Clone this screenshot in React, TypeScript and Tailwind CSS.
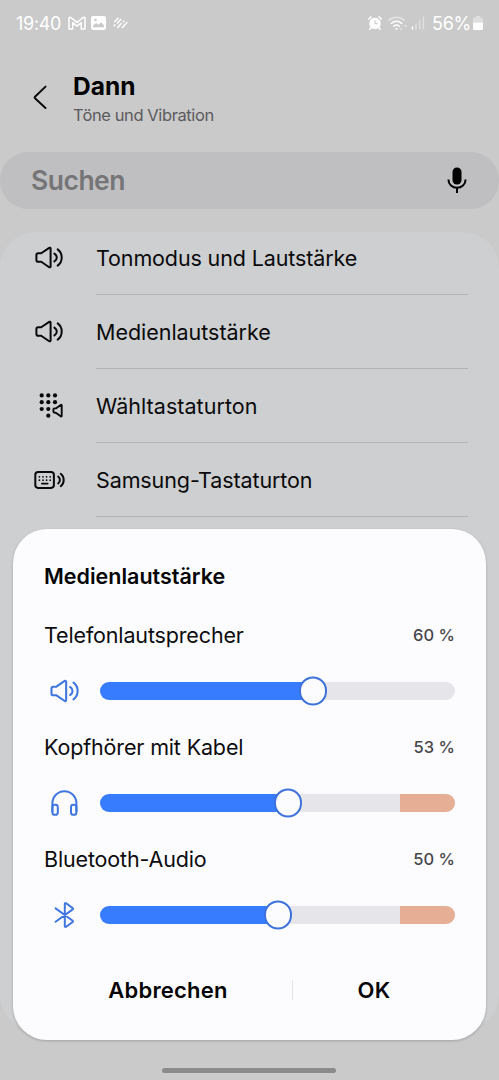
import { useState } from "react";
import type { ReactNode } from "react";

interface IconProps {
  className?: string;
}

function SpeakerIcon({ className = "" }: IconProps) {
  return (
    <svg viewBox="0 0 30 25" fill="none" stroke="currentColor" strokeWidth="2" strokeLinecap="round" strokeLinejoin="round" className={className}>
      <path d="M7.2 8.3H4.2a1.8 1.8 0 0 0-1.8 1.8v4.8a1.8 1.8 0 0 0 1.8 1.8h3l8 5.5a.9.9 0 0 0 1.4-.7v-18a.9.9 0 0 0-1.4-.7z" />
      <path d="M20.4 8.6q2.4 1.6 2.4 3.9t-2.4 3.9" />
      <path d="M23.7 4.4q4 2.9 4 8.1t-4 8.1" />
    </svg>
  );
}

function DialpadIcon({ className = "" }: IconProps) {
  const dots = [
    [7.7, 3.4], [14.3, 3.4], [21, 3.4],
    [7.7, 10.2], [14.3, 10.2], [21, 10.2],
    [7.7, 17], [14.3, 17],
    [14.3, 23.7],
  ];
  return (
    <svg viewBox="0 0 32 28" fill="none" className={className}>
      {dots.map(([x, y]) => (
        <circle key={`${x}-${y}`} cx={x} cy={y} r="2.1" fill="currentColor" />
      ))}
      <path
        d="M21.8 16.4h-1.2a1.2 1.2 0 0 0-1.2 1.2v2a1.2 1.2 0 0 0 1.2 1.2h1.2l4.9 3.5a.6.6 0 0 0 1-.5V13.4a.6.6 0 0 0-1-.5z"
        stroke="currentColor"
        strokeWidth="1.9"
        strokeLinejoin="round"
      />
    </svg>
  );
}

function KeyboardSoundIcon({ className = "" }: IconProps) {
  return (
    <svg viewBox="0 0 32 24" fill="none" stroke="currentColor" strokeLinecap="round" className={className}>
      <rect x="1.3" y="3.9" width="18.6" height="16" rx="2.8" strokeWidth="2" />
      <path d="M5.4 8.8h.01M9 8.8h.01M12.6 8.8h.01M16.2 8.8h.01M5.4 12.2h.01M9 12.2h.01M12.6 12.2h.01M16.2 12.2h.01" strokeWidth="1.7" />
      <path d="M7.8 15.6h6" strokeWidth="1.6" />
      <path d="M24.2 8.6q1.7 1.4 1.7 3.4t-1.7 3.4M26.8 5.8q2.9 2.3 2.9 6.2t-2.9 6.2" strokeWidth="2" />
    </svg>
  );
}

function HeadphonesIcon({ className = "" }: IconProps) {
  return (
    <svg viewBox="0 0 30 30" fill="none" stroke="currentColor" strokeWidth="2" className={className}>
      <path d="M3.4 24V15.3a12 12 0 0 1 24 0V24" />
      <rect x="3.4" y="16.8" width="5.4" height="10" rx="2.4" />
      <rect x="22" y="16.8" width="5.4" height="10" rx="2.4" />
    </svg>
  );
}

function BluetoothIcon({ className = "" }: IconProps) {
  return (
    <svg viewBox="0 0 30 30" fill="none" stroke="currentColor" strokeWidth="2" strokeLinecap="round" strokeLinejoin="round" className={className}>
      <path d="m6.6 8.4 17.1 12.3a.8.8 0 0 1 0 1.3l-6.6 4.8a.8.8 0 0 1-1.3-.7V4a.8.8 0 0 1 1.3-.7l6.6 4.8a.8.8 0 0 1 0 1.3L6.6 21.8" />
    </svg>
  );
}

function StatusBar() {
  return (
    <div className="flex h-[46px] items-center justify-between pl-4 pr-4 text-white">
      <div className="flex items-center">
        <span className="w-[52px] pt-0.5 text-[18px] leading-none tracking-[-0.3px]">19:40</span>
        <svg viewBox="0 0 18 14" className="h-3.5 w-[18px]" fill="none" stroke="currentColor" strokeWidth="1.5" strokeLinejoin="round">
          <path d="M1 13V2.2Q1 .8 2.6 1.4L9 6.4l6.4-5Q17 .8 17 2.2V13h-3.7V6.7L9 10.2 4.7 6.7V13z" />
        </svg>
        <svg viewBox="0 0 15 14" className="ml-[5px] h-3.5 w-[15px]">
          <path
            fillRule="evenodd"
            fill="currentColor"
            d="M2.2 0h10.6A2.2 2.2 0 0 1 15 2.2v9.6a2.2 2.2 0 0 1-2.2 2.2H2.2A2.2 2.2 0 0 1 0 11.8V2.2A2.2 2.2 0 0 1 2.2 0zM2 11.2h11V9.4L10.2 6.2 7.4 8.8 5 7 2 9.8zM4.5 2.7a1.3 1.3 0 1 0 0 2.6 1.3 1.3 0 0 0 0-2.6z"
          />
        </svg>
        <svg viewBox="0 0 16 14" className="ml-[7px] h-3.5 w-4" fill="none" stroke="currentColor" strokeWidth="1.5" strokeLinecap="round">
          <path d="M1.6 5.8 5 2.2M1.2 9.6l.8-.8M4.4 7 7.8 3.4M4.6 11.4l3.6-3.8M10.2 5.6l.6-.6M9.4 11.4l4.6-4.9" />
        </svg>
      </div>
      <div className="flex items-center">
        <svg viewBox="0 0 14 14" className="h-3.5 w-3.5" fill="none">
          <circle cx="7" cy="7.4" r="5.7" fill="currentColor" />
          <path d="M.8 3 3 .8M13.2 3 11 .8M3.2 11.5l-1.5 1.8M10.8 11.5l1.5 1.8" stroke="currentColor" strokeWidth="1.5" strokeLinecap="round" />
          <path d="M7 4.2v3.5h2.8" stroke="#cacaca" strokeWidth="1.1" />
        </svg>
        <svg viewBox="0 0 20 15" className="ml-[6px] h-[15px] w-5" fill="none" stroke="currentColor" strokeWidth="1.5" strokeLinecap="round">
          <path d="M1 4.2a11 11 0 0 1 15 0" opacity=".5" />
          <path d="M3.3 7.4a7.4 7.4 0 0 1 10.4 0M5.8 10.2a4 4 0 0 1 5.4 0" />
          <circle cx="8.5" cy="12.8" r="1.1" fill="currentColor" stroke="none" />
          <path d="M11 12.4h4l-2 2.4zM15.5 10.7h4l-2-2.4z" fill="currentColor" stroke="none" opacity=".4" />
        </svg>
        <svg viewBox="0 0 14 14" className="ml-[3px] h-3.5 w-3.5" stroke="currentColor" strokeWidth="1.5" strokeLinecap="round">
          <path d="M1.5 11v2" />
          <path d="M5 8v5M8.7 4.5V13M12.4 1v12" opacity=".4" />
        </svg>
        <span className="ml-[7px] w-[39px] whitespace-nowrap pt-0.5 text-[18px] leading-none tracking-[-0.3px]">56%</span>
        <svg viewBox="0 0 10 14" className="ml-[2px] h-3.5 w-2.5" fill="currentColor">
          <path d="M3 0h4v1.5h1.5A1.5 1.5 0 0 1 10 3v4H0V3a1.5 1.5 0 0 1 1.5-1.5H3z" opacity=".4" />
          <path d="M0 6.8h10v5.7A1.5 1.5 0 0 1 8.5 14h-7A1.5 1.5 0 0 1 0 12.5z" />
        </svg>
      </div>
    </div>
  );
}

const settings = [
  { label: "Tonmodus und Lautstärke", icon: <SpeakerIcon className="h-[25px] w-[30px]" />, tracking: "tracking-[-0.13px]" },
  { label: "Medienlautstärke", icon: <SpeakerIcon className="h-[25px] w-[30px]" />, tracking: "tracking-[-0.03px]" },
  { label: "Wähltastaturton", icon: <DialpadIcon className="h-7 w-8" />, tracking: "tracking-[0.05px]" },
  { label: "Samsung-Tastaturton", icon: <KeyboardSoundIcon className="h-6 w-8" />, tracking: "tracking-[-0.11px]" },
];

interface VolumeRowProps {
  label: string;
  icon: ReactNode;
  value: number;
  warn?: boolean;
  onChange: (value: number) => void;
}

function VolumeRow({ label, icon, value, warn = false, onChange }: VolumeRowProps) {
  return (
    <div className="h-28">
      <div className="flex h-[30px] items-center justify-between">
        <span className="text-[21.5px] tracking-[-0.15px] text-[#0c0c0e]">{label}</span>
        <span className="text-[16.5px] font-medium tracking-[0.05px] text-[#47474a]">{value} %</span>
      </div>
      <div className="mt-[26px] flex h-[30px] items-center">
        <div className="flex w-14 pl-[5px] text-[#3f76df]">{icon}</div>
        <div className="relative h-[18px] flex-1">
          <div className="flex h-full overflow-hidden rounded-full bg-[#e6e5e9]">
            <div className="bg-[#377bff]" style={{ width: `${value}%` }} />
            {warn && <div className="ml-auto w-[55px] bg-[#e5ae95]" />}
          </div>
          {/* Thumb */}
          <div
            className="absolute top-1/2 h-[29px] w-[28px] -translate-x-1/2 -translate-y-1/2 rounded-full border-2 border-[#3e72db] bg-[#fcfcff]"
            style={{ left: `${value}%` }}
          />
          <input
            type="range"
            aria-label={label}
            value={value}
            onChange={(e) => onChange(Number(e.target.value))}
            className="absolute inset-0 w-full cursor-pointer opacity-0"
          />
        </div>
      </div>
    </div>
  );
}

function VolumeDialog() {
  const [speaker, setSpeaker] = useState(60);
  const [wired, setWired] = useState(53);
  const [bluetooth, setBluetooth] = useState(50);

  return (
    <div className="absolute left-[13px] top-[529px] flex h-[511px] w-[473px] flex-col rounded-[34px] bg-[#fcfcff] px-[31px] pt-8 shadow-[0_1px_3px_rgba(0,0,0,0.2)]">
      <h2 className="h-[59px] text-[21.5px] font-semibold leading-[30px] text-[#050505]">Medienlautstärke</h2>
      <VolumeRow label="Telefonlautsprecher" icon={<SpeakerIcon className="h-[26px] w-[31px]" />} value={speaker} onChange={setSpeaker} />
      <VolumeRow label="Kopfhörer mit Kabel" icon={<HeadphonesIcon className="h-[30px] w-[30px]" />} value={wired} warn onChange={setWired} />
      <VolumeRow label="Bluetooth-Audio" icon={<BluetoothIcon className="h-[30px] w-[30px]" />} value={bluetooth} warn onChange={setBluetooth} />
      <div className="flex h-[68px] items-center text-[22px] font-semibold text-[#050505]">
        <button className="w-[248px] tracking-[0.2px]">Abbrechen</button>
        <div className="h-5 w-px bg-[#e4e4e7]" />
        <button className="flex-1 tracking-[0.4px]">OK</button>
      </div>
    </div>
  );
}

export default function App() {
  return (
    <div className="relative flex h-[1080px] w-[499px] flex-col overflow-hidden bg-[#cacaca] font-['Inter','Liberation_Sans',sans-serif] text-[#0a0a0b]">
      <StatusBar />

      <header className="flex h-[106px] items-start pt-[25px]">
        <button aria-label="Zurück" className="ml-[32px] mt-[13px] w-[41px]">
          <svg viewBox="0 0 16 26" className="h-[26px] w-4" fill="none" stroke="currentColor" strokeWidth="2" strokeLinecap="round" strokeLinejoin="round">
            <path d="M13.5 2.6 3 12.7q-.8.8 0 1.6L13.5 24" />
          </svg>
        </button>
        <div>
          <h1 className="text-[24.5px] font-bold leading-[30px] text-black">Dann</h1>
          <p className="text-[16.5px] leading-7 tracking-[-0.4px] text-[#5b5b5d]">Töne und Vibration</p>
        </div>
      </header>

      <div className="flex h-[57px] shrink-0 items-center justify-between rounded-full bg-[#bfbfc1] pl-[31px] pr-8">
        <span className="pt-px text-[26.5px] font-semibold tracking-[-0.5px] text-[#757577]">Suchen</span>
        <svg viewBox="0 0 20 28" className="h-7 w-5 text-black" fill="none" stroke="currentColor" strokeWidth="2">
          <rect x="5.5" y=".5" width="9" height="17" rx="4.5" fill="currentColor" stroke="none" />
          <path d="M1.5 12.5v.5a8.5 7.8 0 0 0 17 0v-.5M10 20.8V26" />
        </svg>
      </div>

      <main className="mt-[23px] h-[798px] shrink-0 overflow-hidden rounded-[36px] bg-[#cecfd1]">
        <ul className="-mt-[11px]">
          {settings.map((item) => (
            <li key={item.label} className="flex h-[74px] pl-[34px] pr-[31px]">
              <div className="flex h-[73px] w-[62px] items-center">{item.icon}</div>
              <div className="flex flex-1 items-center border-b border-[#b4b4b7] pt-0.5">
                <span className={`text-[21.5px] ${item.tracking}`}>{item.label}</span>
              </div>
            </li>
          ))}
        </ul>
      </main>

      <VolumeDialog />

      {/* Gesture bar */}
      <div className="absolute bottom-[7px] left-[162px] h-[5px] w-[174px] rounded-full bg-[#8b8b8b]" />
    </div>
  );
}
